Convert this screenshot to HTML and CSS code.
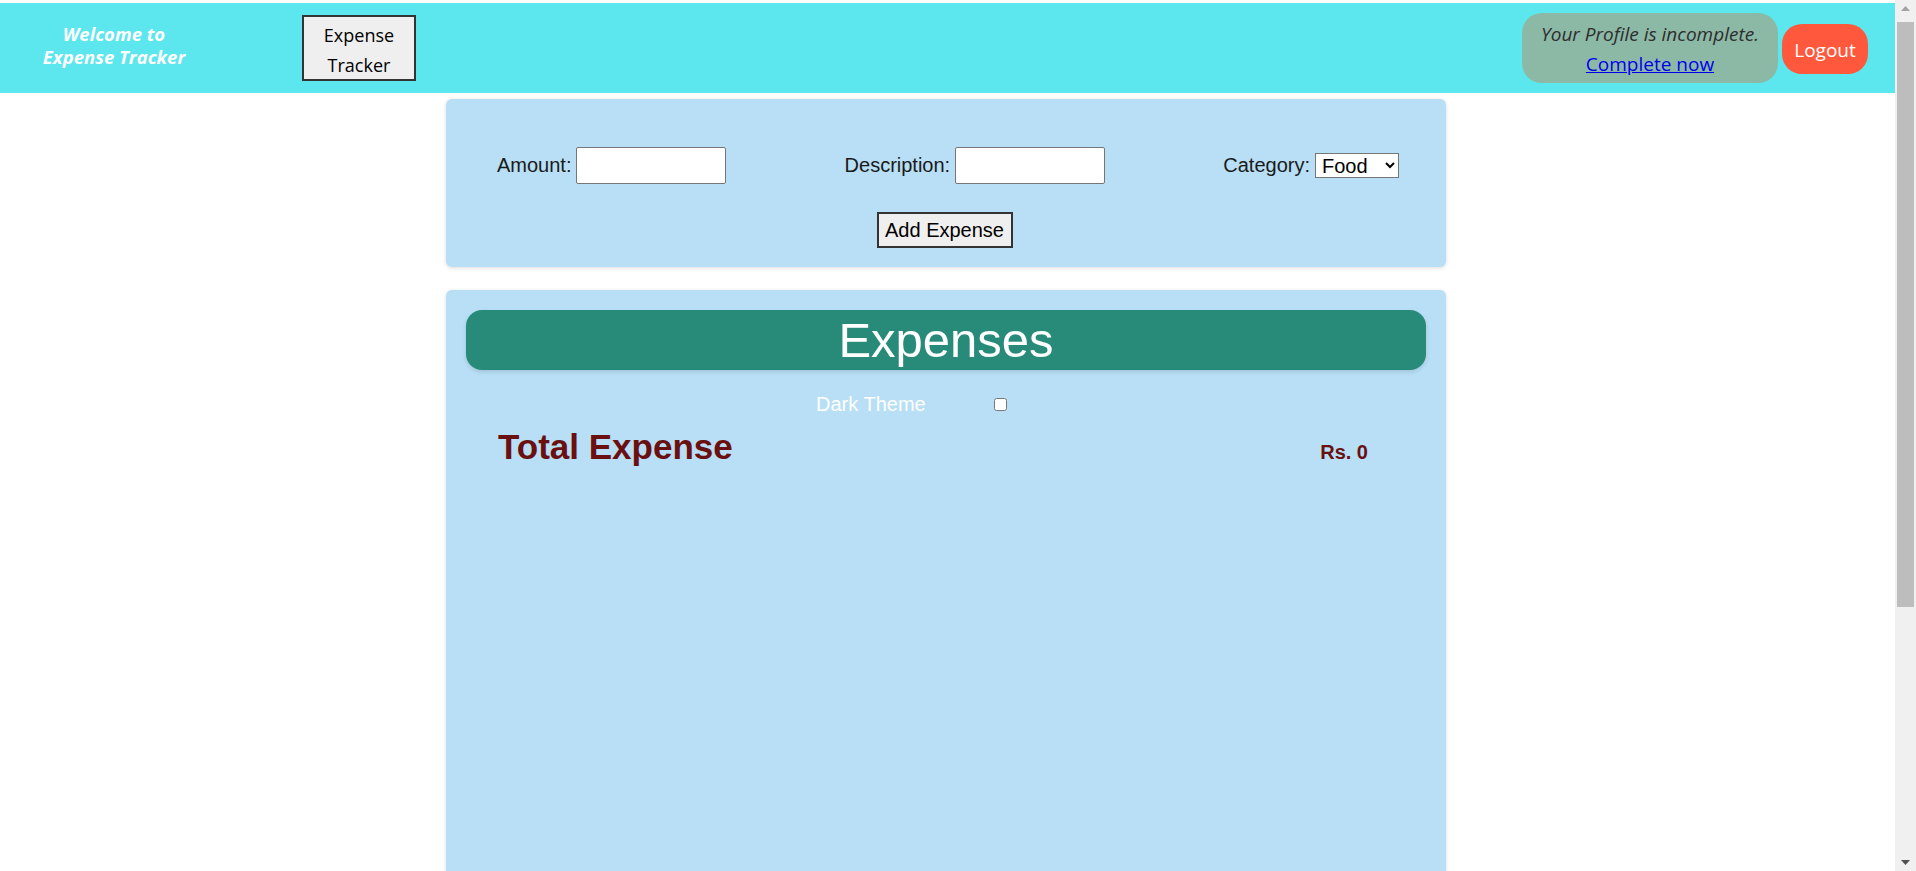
FILE: index.html
```html
<!DOCTYPE html>
<html lang="en">
<head>
<meta charset="utf-8">
<title>Expense Tracker</title>
<link rel="stylesheet" href="styles.css">
</head>
<body>
<div class="viewport">
  <header class="topbar">
    <div class="brand">Welcome to<br>Expense Tracker</div>
    <button class="nav-btn" type="button">Expense<br>Tracker</button>
    <div class="spacer"></div>
    <div class="profile">
      <span class="profile-msg">Your Profile is incomplete.</span>
      <a class="profile-link" href="#">Complete now</a>
    </div>
    <button class="logout" type="button">Logout</button>
  </header>
  <div class="page">
    <main class="main">
      <form class="card form-card">
        <div class="fields">
          <label class="field">Amount: <input class="text-input" type="number"></label>
          <label class="field">Description: <input class="text-input" type="text"></label>
          <label class="field">Category: <select class="select">
            <option>Food</option>
            <option>Petrol</option>
            <option>Salary</option>
          </select></label>
        </div>
        <div class="actions">
          <button class="add-btn" type="button">Add Expense</button>
        </div>
      </form>
      <section class="card expenses-card">
        <h2 class="expenses-title">Expenses</h2>
        <div class="theme-row">
          <span class="theme-label">Dark Theme</span>
          <input class="theme-check" type="checkbox">
        </div>
        <div class="total-row">
          <h1 class="total-title">Total Expense</h1>
          <span class="total-value">Rs. 0</span>
        </div>
      </section>
    </main>
  </div>
</div>
<div class="scrollbar" aria-hidden="true">
  <div class="sb-arrow">
    <svg width="9" height="5" viewBox="0 0 9 5"><path d="M0 5 L4.5 0 L9 5 Z" fill="#a3a3a3"/></svg>
  </div>
  <div class="sb-thumb"></div>
  <div class="sb-arrow sb-arrow-down">
    <svg width="9" height="5" viewBox="0 0 9 5"><path d="M0 0 L9 0 L4.5 5 Z" fill="#505050"/></svg>
  </div>
</div>
</body>
</html>
```

FILE: styles.css
```css
html, body {
  margin: 0;
  padding: 0;
}
body {
  font-family: "Liberation Sans", Arial, sans-serif;
  background: #ffffff;
  color: #111;
  display: flex;
  align-items: flex-start;
}
.viewport {
  flex: 1;
  min-width: 0;
  padding-bottom: 6px;
}

/* ---------- fake browser scrollbar ---------- */
.scrollbar {
  position: sticky;
  top: 0;
  width: 21px;
  height: 100vh;
  flex: none;
  background: #f0f0f0;
  display: flex;
  flex-direction: column;
  align-items: center;
}
.sb-arrow {
  height: 17px;
  width: 100%;
  display: flex;
  align-items: center;
  justify-content: center;
}
.sb-arrow svg {
  display: block;
}
.sb-thumb {
  margin-top: 5px;
  width: 17px;
  height: 585px;
  background: #bdbdbd;
}
.sb-arrow-down {
  margin-top: auto;
}

/* ---------- top bar ---------- */
.topbar {
  margin-top: 3px;
  height: 90px;
  background: #5ce6ee;
  display: flex;
  align-items: center;
  padding-right: 27px;
}
.brand {
  width: 228px;
  padding-bottom: 7px;
  text-align: center;
  color: #ffffff;
  font-family: "Open Sans", "Noto Sans", sans-serif;
  font-style: italic;
  font-weight: 700;
  font-size: 18.5px;
  line-height: 23px;
}
.nav-btn {
  margin-left: 74px;
  width: 114px;
  height: 66px;
  padding: 3px 0 0;
  border: 2px solid #333333;
  background: #efefef;
  color: #000;
  font-family: "Open Sans", "Noto Sans", sans-serif;
  font-size: 18px;
  line-height: 30px;
}
.spacer {
  flex: 1;
}
.profile {
  width: 256px;
  height: 70px;
  box-sizing: border-box;
  padding-top: 2px;
  border-radius: 20px;
  background: #8cb8a6;
  display: flex;
  flex-direction: column;
  align-items: center;
  justify-content: center;
  font-family: "Open Sans", "Noto Sans", sans-serif;
  font-size: 19px;
  line-height: 30px;
}
.profile-msg {
  font-style: italic;
  color: #2e2e2e;
}
.profile-link {
  color: #0000ee;
  text-decoration: underline;
}
.logout {
  margin-left: 4px;
  margin-top: 2px;
  width: 86px;
  height: 50px;
  border: none;
  border-radius: 20px;
  background: #ff583c;
  color: #ffffff;
  font-family: "Open Sans", "Noto Sans", sans-serif;
  font-size: 19px;
  padding: 2px 0 0;
}

/* ---------- main ---------- */
.page {
  padding-right: 3px;
}
.main {
  width: 1000px;
  margin: 6px auto 0;
}
.card {
  background: #b8dff5;
  border-radius: 6px;
  box-shadow: 0 1px 4px rgba(0, 0, 0, 0.14);
  box-sizing: border-box;
}
.form-card {
  padding: 48px 47px 19px 51px;
  margin: 0;
}
.fields {
  display: flex;
  justify-content: space-between;
  align-items: center;
  height: 37px;
}
.field {
  font-size: 20px;
  color: #1a1a1a;
  display: flex;
  align-items: center;
  gap: 5px;
}
.text-input {
  width: 150px;
  height: 37px;
  box-sizing: border-box;
  border: 1px solid #767676;
  border-radius: 2px;
  background: #fff;
  padding: 0 4px;
  font-size: 16px;
}
.select {
  width: 84px;
  height: 25px;
  box-sizing: border-box;
  border: 1px solid #767676;
  border-radius: 0;
  background: #fff;
  font-family: "Liberation Sans", Arial, sans-serif;
  font-size: 20px;
  color: #000;
  padding: 0 0 0 2px;
}
.actions {
  display: flex;
  justify-content: center;
  margin-top: 28px;
  padding-right: 7px;
}
.add-btn {
  width: 136px;
  height: 36px;
  padding: 0;
  border: 2px solid #333333;
  background: #efefef;
  color: #000;
  font-family: "Liberation Sans", Arial, sans-serif;
  font-size: 20px;
}

.expenses-card {
  margin-top: 23px;
  padding: 20px;
  height: 950px;
}
.expenses-title {
  margin: 0;
  height: 60px;
  border-radius: 16px;
  background: #288a79;
  color: #ffffff;
  text-align: center;
  font-weight: 400;
  font-size: 49px;
  line-height: 60px;
  box-shadow: 0 2px 4px rgba(0, 0, 0, 0.12);
}
.theme-row {
  margin-top: 22px;
  height: 24px;
  display: flex;
  align-items: center;
  padding-left: 350px;
}
.theme-label {
  color: #ffffff;
  font-size: 20px;
  line-height: 24px;
}
.theme-check {
  margin: 0 0 0 68px;
  width: 13px;
  height: 13px;
}
.total-row {
  margin-top: 11px;
  display: flex;
  justify-content: space-between;
  align-items: baseline;
  padding: 0 58px 0 32px;
  color: #6a1010;
}
.total-title {
  margin: 0;
  font-size: 35px;
  line-height: 40px;
  font-weight: 700;
}
.total-value {
  font-size: 20px;
  font-weight: 700;
}
```
